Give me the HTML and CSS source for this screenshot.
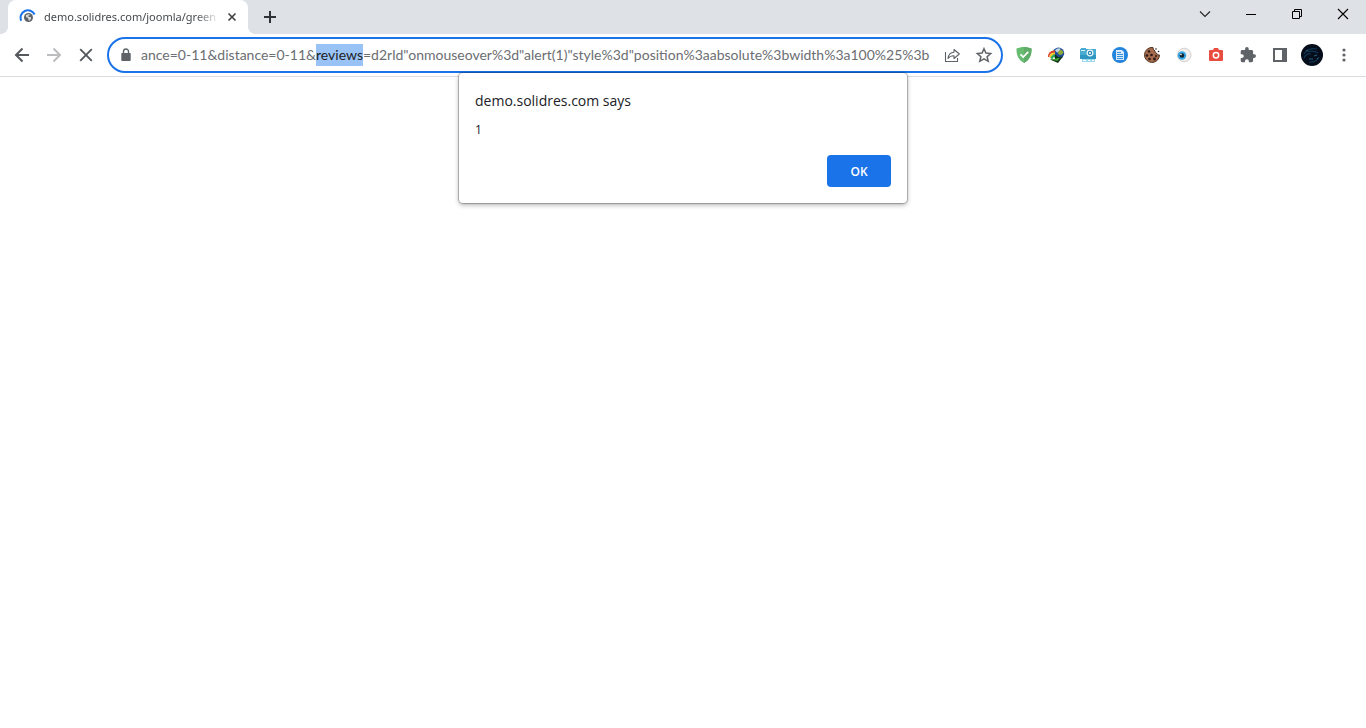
FILE: index.html
```html
<!DOCTYPE html>
<html lang="en">
<head>
<meta charset="utf-8">
<title>demo.solidres.com</title>
<link rel="stylesheet" href="styles.css">
</head>
<body>
<header class="browser">
  <div class="tab-strip">
    <div class="tab">
      <svg class="favicon" width="18" height="18" viewBox="0 0 18 18"><circle cx="9.500" cy="9.500" r="4.500" fill="#5f6368"/><path d="M7 7l3-1 1 1-2 1 1 1 2 0 0 2-2 2-1-3-2-1z" fill="#d5d7d9"/><path d="M2.300 12.800A7.200 7.200 0 0 1 15.600 6.500" fill="none" stroke="#1a73e8" stroke-width="2"/></svg>
      <span class="tab-title">demo.solidres.com/joomla/green</span>
      <button class="tab-close" aria-label="Close tab"><svg width="16" height="16" viewBox="0 0 16 16"><path d="M4.500 4.500l7 7M11.500 4.500l-7 7" stroke="#3c4043" stroke-width="1.600"/></svg></button>
    </div>
    <button class="new-tab" aria-label="New tab"><svg width="16" height="16" viewBox="0 0 16 16"><path d="M8 2v12M2 8h12" stroke="#2f3236" stroke-width="2"/></svg></button>
    <div class="window-controls">
      <button class="window-button" aria-label="Search tabs"><svg width="12" height="12" viewBox="0 0 12 12"><path d="M1 3.500l5 5 5-5" fill="none" stroke="#222" stroke-width="1.100"/></svg></button>
      <button class="window-button" aria-label="Minimize"><svg width="12" height="12" viewBox="0 0 12 12"><path d="M1 6.500h10" stroke="#000"/></svg></button>
      <button class="window-button" aria-label="Restore"><svg width="12" height="12" viewBox="0 0 12 12"><path d="M1.500 3.500h7v7h-7zM3.500 3.500v-2h7v7h-2" fill="none" stroke="#000"/></svg></button>
      <button class="window-button" aria-label="Close"><svg width="12" height="12" viewBox="0 0 12 12"><path d="M1 1l10 10M11 1l-10 10" stroke="#000" stroke-width="1.100"/></svg></button>
    </div>
  </div>
  <div class="toolbar">
    <nav class="tools" aria-label="Navigation">
      <button class="tool" aria-label="Back"><svg width="20" height="20" viewBox="0 0 20 20"><path d="M17 10H4M10.500 3.500L4 10l6.500 6.500" fill="none" stroke="#54585d" stroke-width="2"/></svg></button>
      <button class="tool" aria-label="Forward"><svg width="20" height="20" viewBox="0 0 20 20"><path d="M3 10h13M9.500 3.500L16 10l-6.500 6.500" fill="none" stroke="#bbbdbf" stroke-width="2"/></svg></button>
      <button class="tool" aria-label="Stop"><svg width="20" height="20" viewBox="0 0 20 20"><path d="M4.200 4.200l11.600 11.600M15.800 4.200L4.200 15.800" stroke="#54585d" stroke-width="1.900"/></svg></button>
    </nav>
    <div class="omnibox">
      <svg class="lock" width="16" height="16" viewBox="0 0 16 16"><path d="M4 6h8q.7 0 .7.700v6.600q0 .7-.7.700H4q-.7 0-.7-.7V6.700Q3.300 6 4 6z" fill="#5f6368"/><path d="M5.500 6.500V4.500a2.500 2.500 0 0 1 5 0v2" fill="none" stroke="#5f6368" stroke-width="1.400"/></svg>
      <input class="url" id="url" type="text" aria-label="Address" spellcheck="false" value="ance=0-11&amp;distance=0-11&amp;reviews=d2rld&quot;onmouseover%3d&quot;alert(1)&quot;style%3d&quot;position%3aabsolute%3bwidth%3a100%25%3b">
      <button class="omni-button" aria-label="Share"><svg width="18" height="18" viewBox="0 0 18 18" fill="none" stroke="#5f6368" stroke-width="1.100"><path d="M2.500 6v9.500h12V12"/><path d="M5 12.500C5.500 8.500 7.500 6.500 11 6.300V3.500L16.300 8 11 12.500V9.800C8.200 9.700 6.500 10.500 5 12.500z" stroke-linejoin="round"/></svg></button>
      <button class="omni-button" aria-label="Bookmark"><svg width="18" height="18" viewBox="0 0 18 18"><path d="M9 2.700l1.900 4.400 4.800.4-3.600 3.200 1.100 4.600L9 12.800l-4.200 2.500 1.100-4.600-3.600-3.200 4.800-.4z" fill="none" stroke="#5f6368" stroke-width="1.500"/></svg></button>
    </div>
    <div class="tools">
      <button class="tool" aria-label="Ad blocker"><svg width="18" height="18" viewBox="0 0 18 18"><path d="M9 1c2.600 0 5 .6 7.500 1.500C16.800 9 14.500 14 9 17 3.500 14 1.200 9 1.500 2.500 4 1.600 6.400 1 9 1z" fill="#68bc71"/><path d="M9 1c2.600 0 5 .6 7.500 1.500C16.800 9 14.500 14 9 17z" fill="#5eac67"/><path d="M5.500 8.300l2.700 2.700 5-5.200" fill="none" stroke="#fff" stroke-width="1.700"/></svg></button>
      <button class="tool" aria-label="Download manager"><svg width="18" height="18" viewBox="0 0 18 18"><circle cx="11.500" cy="7.300" r="5.700" fill="#1e4a9c"/><path d="M8 4.500Q10 1.500 13.500 2.500L13 5l-3 1.500z" fill="#c2d6e2"/><path d="M13 3.500q3 .5 3.500 3-1 2.500-4 2.500l-2-2z" fill="#8fab35"/><path d="M1 11C1 6.500 4 4.300 8 4.500V7C4 6.500 2.500 8 2.500 11z" fill="#d8402a"/><path d="M2.500 11.500Q2.500 6.500 8 6.500V8.500Q4 8.500 4 12z" fill="#f3c92a"/><path d="M3.500 12.500Q4 8.500 8.500 8.500V11Q6 10.500 5.500 13z" fill="#28a650"/><path d="M8 8l3 3 5-.5-5 6.500-8-3.500 5-.5z" fill="#12331b"/><path d="M4 13.500l5-1 4-1-2.500 3.500z" fill="#3aa52e"/></svg></button>
      <button class="tool" aria-label="Screen capture"><svg width="18" height="18" viewBox="0 0 18 18"><path d="M2 3V2h5v1h10v10H1V3z" fill="#4aabd1"/><path d="M1 9h16v4H1z" fill="#2f96c2"/><path d="M2 4h4v1H2z" fill="#d9f0f8"/><circle cx="11" cy="7" r="3.400" fill="#e8f7fb"/><circle cx="11" cy="7" r="2.200" fill="#2885ad"/><circle cx="11" cy="7" r="1" fill="#fff"/><path d="M3 13h13v3H3z" fill="#9bd7ed"/><path d="M4 14.500h3M9 14.500h2M13 14.500h2" stroke="#fff"/></svg></button>
      <button class="tool" aria-label="Documents"><svg width="18" height="18" viewBox="0 0 18 18"><circle cx="9" cy="9" r="8" fill="#2483db"/><path d="M5 4h6l2 2v8H5z" fill="#d9ebfa"/><path d="M6 6.500h4M6 8.500h6M6 10.500h6M6 12.500h6" stroke="#2483db" stroke-width=".9"/></svg></button>
      <button class="tool" aria-label="Cookies"><svg width="18" height="18" viewBox="0 0 18 18"><path d="M10 1.500A7.500 7.500 0 1 0 16.500 9q-2 .5-2.500-1.500-2.500-.5-2-2.500-2-.8-2-3.500z" fill="#a56b4c" stroke="#50301f"/><g fill="#2b1a17"><circle cx="6" cy="5.500" r="1.300"/><circle cx="4" cy="9.500" r="1.300"/><circle cx="8.500" cy="9" r="1.300"/><circle cx="6.500" cy="13" r="1.300"/><circle cx="11.500" cy="13" r="1.400"/><circle cx="13" cy="10" r="1"/><circle cx="13" cy="3" r=".8"/><circle cx="15.500" cy="5.500" r=".8"/></g></svg></button>
      <button class="tool" aria-label="Eye"><svg width="18" height="18" viewBox="0 0 18 18"><circle cx="9.200" cy="9" r="6.800" fill="#f0eeec" stroke="#d5d1ce"/><circle cx="7" cy="9.500" r="4.200" fill="#34a5e1"/><circle cx="7" cy="9.500" r="2.300" fill="#122333"/><circle cx="6" cy="8.500" r=".8" fill="#fff"/></svg></button>
      <button class="tool" aria-label="Screenshot"><svg width="18" height="18" viewBox="0 0 18 18"><path d="M3 4h3l1-2h4l1 2h3q1 0 1 1v9q0 1-1 1H3q-1 0-1-1V5q0-1 1-1z" fill="#e94d3f"/><circle cx="9" cy="9.200" r="2.700" fill="none" stroke="#fff" stroke-width="1.500"/></svg></button>
      <button class="tool" aria-label="Extensions"><svg width="16" height="16" viewBox="1 1 22 22"><path d="M20.500 11H19V7c0-1.100-.9-2-2-2h-4V3.500a2.500 2.500 0 0 0-5 0V5H4c-1.100 0-2 .9-2 2v3.800h1.500a2.700 2.700 0 0 1 0 5.400H2V20c0 1.100.9 2 2 2h3.800v-1.500a2.700 2.700 0 0 1 5.400 0V22H17c1.100 0 2-.9 2-2v-4h1.500a2.500 2.500 0 0 0 0-5z" fill="#5f6368"/></svg></button>
      <button class="tool" aria-label="Side panel"><svg width="18" height="18" viewBox="0 0 18 18"><path d="M3 3h12v12H3z" fill="#fff" stroke="#5f6368" stroke-width="2"/><path d="M11 3h5v12h-5z" fill="#5f6368"/></svg></button>
      <button class="tool" aria-label="Profile"><svg width="22" height="22" viewBox="0 0 22 22"><circle cx="11" cy="11" r="11" fill="#050d1b"/><path d="M3 10Q8 3 16 5M7 8q5-2 10 1M3 14q2-5 7-4M8 18q7 1 10-5" fill="none" stroke="#0e3653" stroke-width="1.200"/><path d="M5 7l2-1M13 12l3-1M8 15l4 0M16 15l1-1" stroke="#236086"/></svg></button>
      <button class="tool" aria-label="Menu"><svg width="18" height="18" viewBox="0 0 18 18" fill="#5f6368"><circle cx="9" cy="4" r="1.600"/><circle cx="9" cy="9" r="1.600"/><circle cx="9" cy="14" r="1.600"/></svg></button>
    </div>
  </div>
  <dialog class="alert" open aria-labelledby="alert-title">
    <h1 class="alert-title" id="alert-title">demo.solidres.com says</h1>
    <p class="alert-message">1</p>
    <form class="alert-actions" method="dialog"><button class="ok">OK</button></form>
  </dialog>
</header>
<main></main>
<script src="script.js"></script>
</body>
</html>
```
FILE: styles.css
```css
* { box-sizing: border-box; }
body {
  min-height: 100vh;
  margin: 0;
  background: #fff;
  color: #202124;
  font-family: "Open Sans", "Noto Sans", sans-serif;
}
button {
  display: flex;
  align-items: center;
  justify-content: center;
  margin: 0;
  padding: 0;
  border: 0;
  background: none;
  font-family: inherit;
}
svg { display: block; flex: none; }
.browser { position: relative; }
.tab-strip {
  display: flex;
  height: 34px;
  padding-left: 8px;
  background: #dee1e6;
}
.tab {
  position: relative;
  display: flex;
  align-items: center;
  width: 240px;
  padding: 0 8px 0 11px;
  border-radius: 8px 8px 0 0;
  background: #fff;
}
.tab::before, .tab::after {
  content: "";
  position: absolute;
  bottom: 0;
  width: 8px;
  height: 8px;
}
.tab::before {
  right: 100%;
  background: radial-gradient(circle at 0 0, transparent 8px, #fff 8px);
}
.tab::after {
  left: 100%;
  background: radial-gradient(circle at 100% 0, transparent 8px, #fff 8px);
}
.tab-title {
  flex: 1;
  margin-left: 7px;
  overflow: hidden;
  white-space: nowrap;
  font-family: "Noto Sans", sans-serif;
  font-size: 11px;
  line-height: 16px;
  color: #45494d;
  mask-image: linear-gradient(to right, #000 calc(100% - 24px), transparent);
}
.tab-close { margin-left: 4px; }
.new-tab { width: 28px; margin-left: 8px; }
.window-controls { display: flex; height: 28px; margin-left: auto; }
.window-button { width: 46px; }
.toolbar {
  display: flex;
  align-items: center;
  gap: 5px;
  height: 43px;
  padding: 0 6px;
  border-bottom: 1px solid #dadce0;
}
.tools { display: flex; flex: none; }
.tool { width: 32px; height: 32px; }
.omnibox {
  display: flex;
  flex: 1;
  align-items: center;
  height: 36px;
  padding: 0 1px 0 9px;
  border: 2px solid #1a73e8;
  border-radius: 18px;
}
.url {
  flex: 1;
  min-width: 0;
  height: 22px;
  margin: 0 2px 0 7px;
  padding: 0;
  border: 0;
  outline: 0;
  background: none;
  font-family: Lato, sans-serif;
  font-size: 14px;
  line-height: 22px;
  color: #6b6e72;
}
.url::selection { background: #99c3f7; color: #202124; }
.omni-button { width: 32px; height: 32px; }
.alert {
  position: absolute;
  top: 73px;
  width: 448px;
  margin: 0 auto;
  padding: 17px 16px 16px;
  border: 0;
  border-radius: 4px;
  background: #fff;
  color: #202124;
  box-shadow: 0 0 1px 1px rgba(0, 0, 0, .25), 0 2px 5px rgba(0, 0, 0, .3);
}
.alert-title { margin: 0; font-size: 14px; font-weight: 400; line-height: 22px; }
.alert-message { margin: 8px 0 15px; font-size: 12px; line-height: 20px; }
.alert-actions { display: flex; justify-content: flex-end; }
.ok {
  width: 64px;
  height: 32px;
  border-radius: 4px;
  background: #1a73e8;
  color: #fff;
  font-size: 12px;
  font-weight: 600;
}
```
FILE: script.js
```js
const url = document.getElementById("url");
const start = url.value.indexOf("reviews");
url.focus();
url.setSelectionRange(start, start + "reviews".length);
```
